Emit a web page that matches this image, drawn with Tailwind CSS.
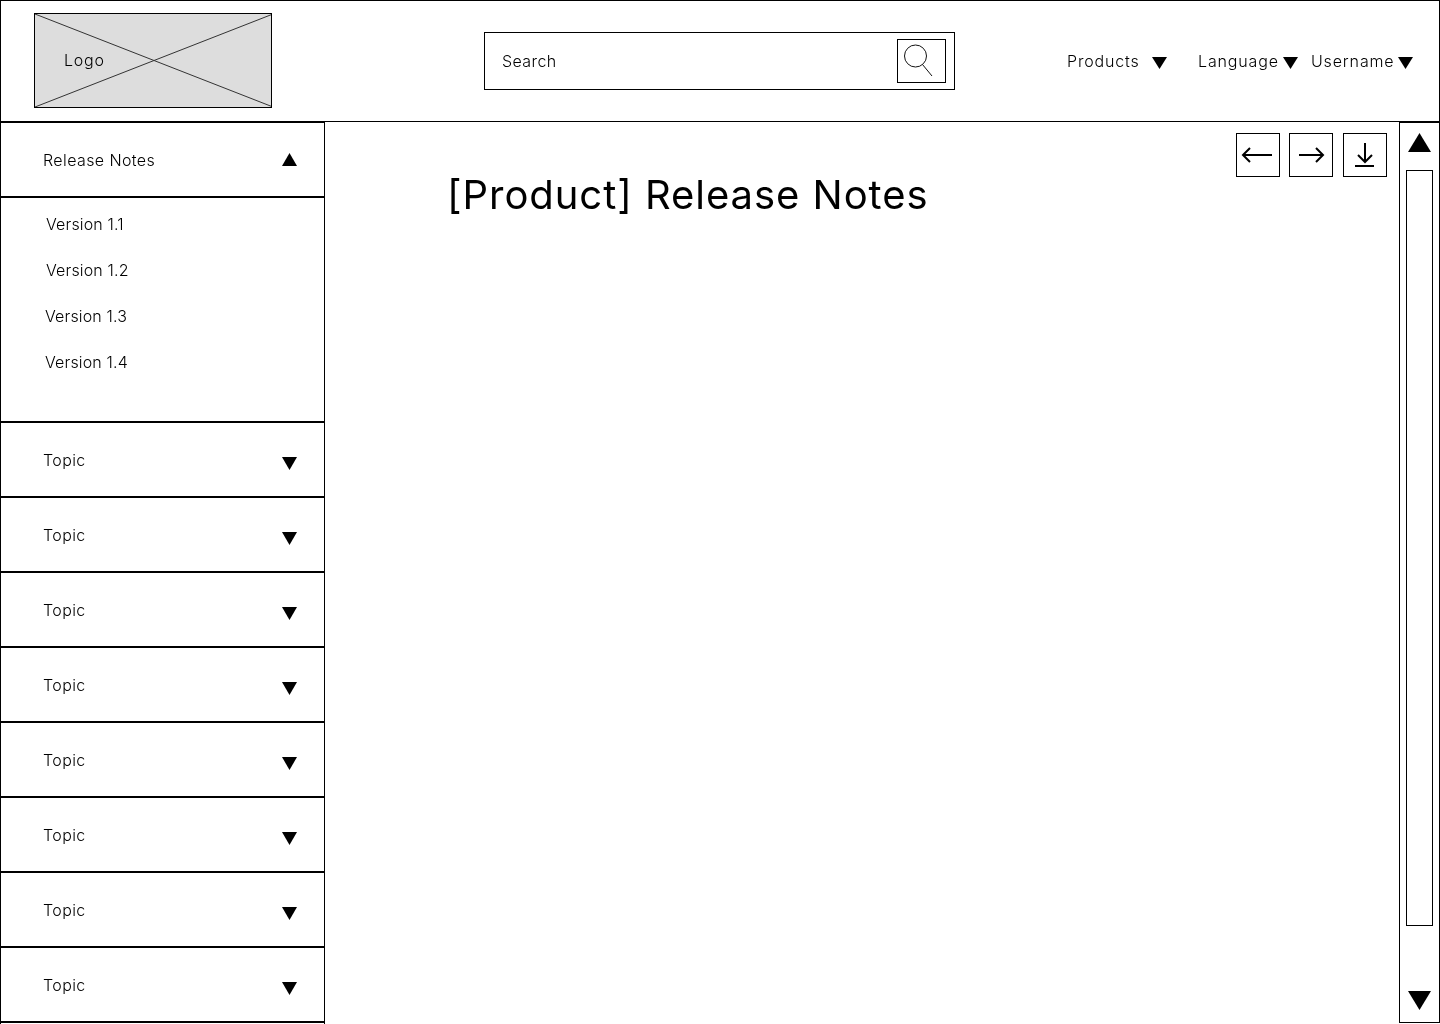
<!DOCTYPE html>
<html lang="en">
<head>
  <meta charset="UTF-8">
  <meta name="viewport" content="width=device-width, initial-scale=1.0">
  <title>Release Notes</title>
  <script src="https://cdn.jsdelivr.net/npm/@tailwindcss/browser@4"></script>
</head>
<body class="bg-white text-black font-['Inter',sans-serif] font-[350] text-[16px] tracking-[0.4px] w-[1440px] h-[1024px] overflow-hidden">
  <header class="h-[121px] border-t border-x border-black flex items-center will-change-transform">
    <div class="relative ml-[33px] w-[238px] h-[95px] -mt-[2px] border border-black bg-[#dddddd] flex items-center pl-[29px]">
      <svg class="absolute inset-0 w-full h-full" viewBox="0 0 236 93" preserveAspectRatio="none" fill="none" stroke="#333333">
        <path d="M0 0L238 93M238 0L0 93"></path>
      </svg>
      <span class="relative tracking-[0.8px]">Logo</span>
    </div>
    <div class="ml-[212px] w-[471px] h-[58px] border border-black flex items-center justify-between pl-[17px] pr-[8px]">
      <span>Search</span>
      <button class="w-[49px] h-[44px] border border-black">
        <svg class="w-[47px] h-[42px]" viewBox="0 0 47 42" fill="none" stroke="#111111">
          <circle cx="17.5" cy="16" r="11"></circle>
          <path d="M24.5 24.5L34 36"></path>
        </svg>
      </button>
    </div>
    <nav class="flex items-center ml-[112px] tracking-[0.85px]">
      <span class="w-[85px]">Products</span>
      <svg class="w-[15px] h-[12px] mt-[3px]" viewBox="0 0 15 12"><path d="M0 0H15L7.5 12Z"></path></svg>
      <span class="ml-[31px] w-[85px]">Language</span>
      <svg class="w-[15px] h-[12px] mt-[3px]" viewBox="0 0 15 12"><path d="M0 0H15L7.5 12Z"></path></svg>
      <span class="ml-[13px] w-[87px]">Username</span>
      <svg class="w-[15px] h-[12px] mt-[3px]" viewBox="0 0 15 12"><path d="M0 0H15L7.5 12Z"></path></svg>
    </nav>
  </header>
  <div class="flex h-[903px] will-change-transform">
    <aside class="w-[325px] shrink-0 border-x border-black">
      <div class="h-[77px] border-y-2 border-black flex items-center justify-between pl-[42px] pr-[27px]">
        <span>Release Notes</span>
        <svg class="w-[15px] h-[13px]" viewBox="0 0 15 13"><path d="M0 13H15L7.5 0Z"></path></svg>
      </div>
      <div class="h-[225px] border-b-2 border-black pt-[3px] pl-[44px] flex flex-col tracking-[0.15px]">
        <a class="h-[46px] flex items-center pl-[1px]">Version 1.1</a>
        <a class="h-[46px] flex items-center pl-[1px]">Version 1.2</a>
        <a class="h-[46px] flex items-center">Version 1.3</a>
        <a class="h-[46px] flex items-center">Version 1.4</a>
      </div>
      <div class="h-[75px] border-b-2 border-black flex items-center justify-between pl-[42px] pr-[27px]"><span>Topic</span><svg class="w-[15px] h-[13px] mt-[8px]" viewBox="0 0 15 13"><path d="M0 0H15L7.5 13Z"></path></svg></div>
      <div class="h-[75px] border-b-2 border-black flex items-center justify-between pl-[42px] pr-[27px]"><span>Topic</span><svg class="w-[15px] h-[13px] mt-[8px]" viewBox="0 0 15 13"><path d="M0 0H15L7.5 13Z"></path></svg></div>
      <div class="h-[75px] border-b-2 border-black flex items-center justify-between pl-[42px] pr-[27px]"><span>Topic</span><svg class="w-[15px] h-[13px] mt-[8px]" viewBox="0 0 15 13"><path d="M0 0H15L7.5 13Z"></path></svg></div>
      <div class="h-[75px] border-b-2 border-black flex items-center justify-between pl-[42px] pr-[27px]"><span>Topic</span><svg class="w-[15px] h-[13px] mt-[8px]" viewBox="0 0 15 13"><path d="M0 0H15L7.5 13Z"></path></svg></div>
      <div class="h-[75px] border-b-2 border-black flex items-center justify-between pl-[42px] pr-[27px]"><span>Topic</span><svg class="w-[15px] h-[13px] mt-[8px]" viewBox="0 0 15 13"><path d="M0 0H15L7.5 13Z"></path></svg></div>
      <div class="h-[75px] border-b-2 border-black flex items-center justify-between pl-[42px] pr-[27px]"><span>Topic</span><svg class="w-[15px] h-[13px] mt-[8px]" viewBox="0 0 15 13"><path d="M0 0H15L7.5 13Z"></path></svg></div>
      <div class="h-[75px] border-b-2 border-black flex items-center justify-between pl-[42px] pr-[27px]"><span>Topic</span><svg class="w-[15px] h-[13px] mt-[8px]" viewBox="0 0 15 13"><path d="M0 0H15L7.5 13Z"></path></svg></div>
      <div class="h-[75px] border-b-2 border-black flex items-center justify-between pl-[42px] pr-[27px]"><span>Topic</span><svg class="w-[15px] h-[13px] mt-[8px]" viewBox="0 0 15 13"><path d="M0 0H15L7.5 13Z"></path></svg></div>
    </aside>
    <main class="flex-1 border-t border-black">
      <div class="flex justify-end pt-[11px] pr-[12px]">
        <button class="w-[44px] h-[44px] border border-black">
          <svg class="w-[42px] h-[42px]" viewBox="0 0 42 42" fill="none" stroke="#000000" stroke-width="2"><path d="M6 21H35M13 14L6 21L13 28"></path></svg>
        </button>
        <button class="ml-[9px] w-[44px] h-[44px] border border-black">
          <svg class="w-[42px] h-[42px]" viewBox="0 0 42 42" fill="none" stroke="#000000" stroke-width="2"><path d="M9 21H33M26 14L33 21L26 28"></path></svg>
        </button>
        <button class="ml-[10px] w-[44px] h-[44px] border border-black">
          <svg class="w-[42px] h-[42px]" viewBox="0 0 42 42" fill="none" stroke="#000000" stroke-width="2"><path d="M21 9V28M14 21L21 28L28 21M11 32H30"></path></svg>
        </button>
      </div>
      <h1 class="pl-[122px] -mt-[12px] text-[40px] font-normal leading-[60px] tracking-[0.95px]">[Product] Release Notes</h1>
    </main>
    <div class="w-[41px] shrink-0 h-[902px] border-x border-b border-t-2 border-black flex flex-col items-center">
      <svg class="mt-[10px] w-[23px] h-[19px]" viewBox="0 0 23 19"><path d="M0 19H23L11.5 0Z"></path></svg>
      <div class="mt-[18px] w-[27px] h-[756px] border border-black"></div>
      <svg class="mt-[65px] w-[23px] h-[19px]" viewBox="0 0 23 19"><path d="M0 0H23L11.5 19Z"></path></svg>
    </div>
  </div>
</body>
</html>
